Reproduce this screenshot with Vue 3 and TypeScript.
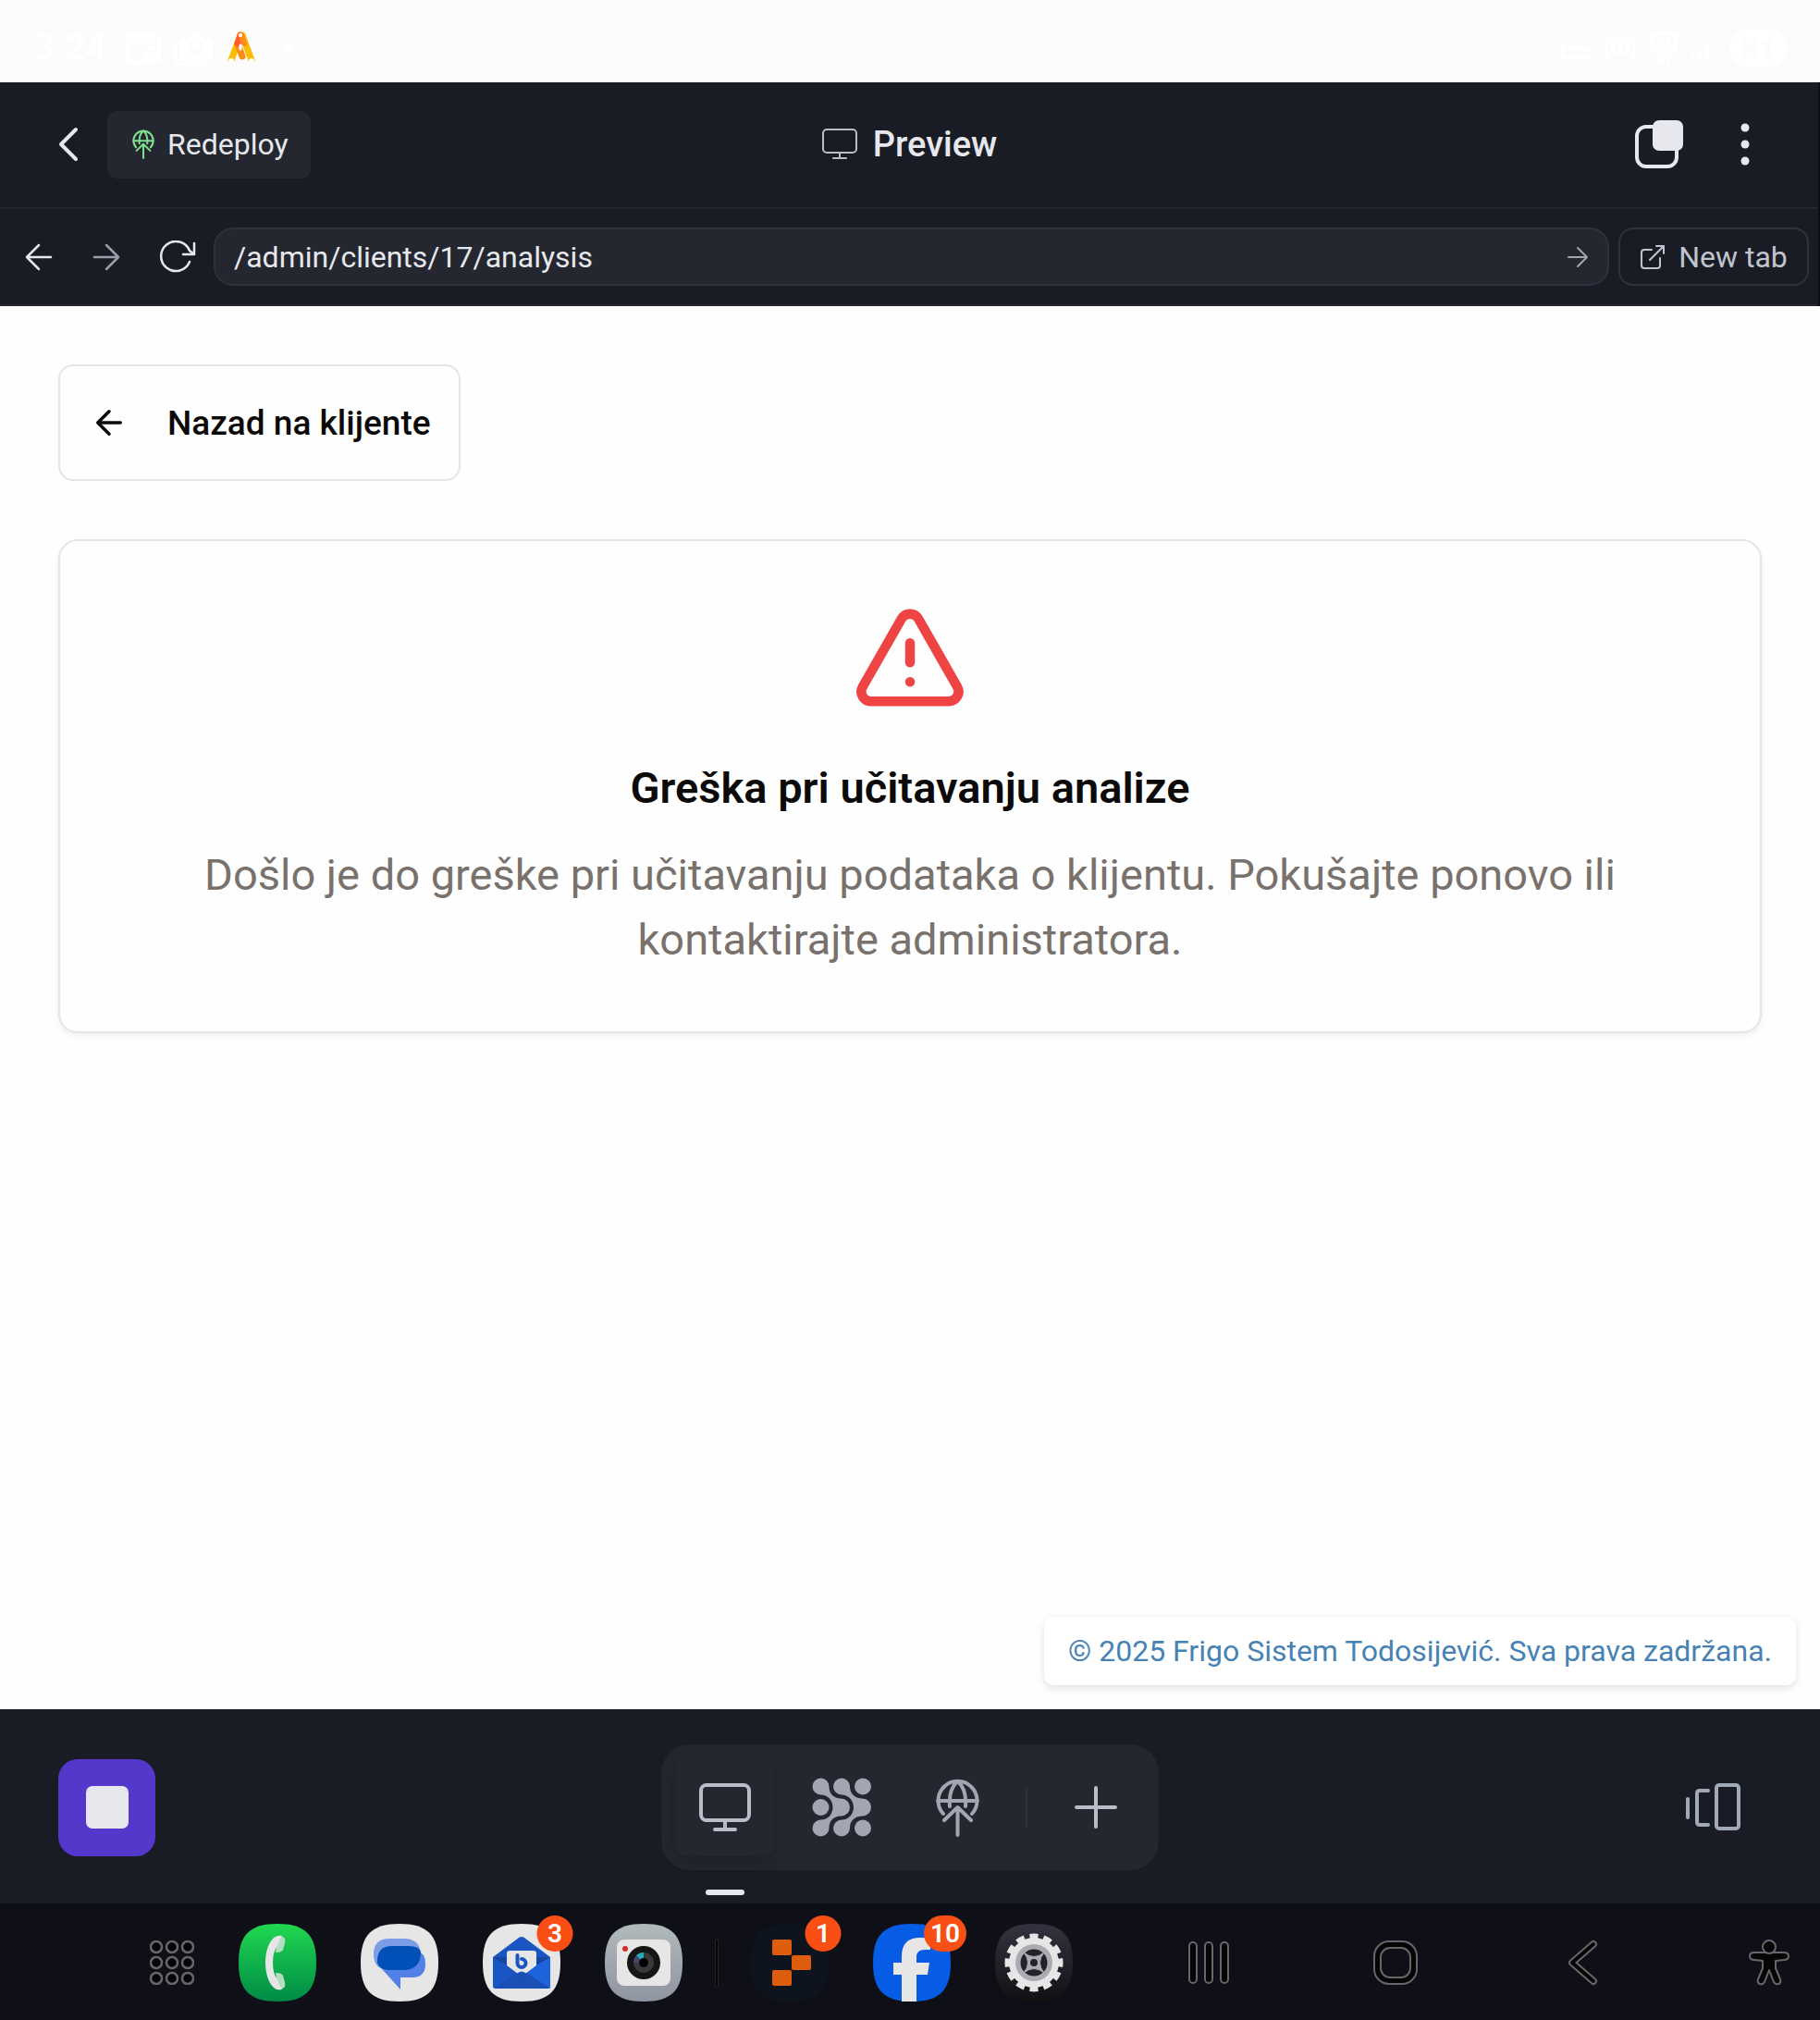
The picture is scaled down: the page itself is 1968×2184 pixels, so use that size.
<script setup lang="ts">
import { ref } from 'vue'

const path = ref('/admin/clients/17/analysis')
const squircle = 'M42 0C72 0 84 12 84 42S72 84 42 84 0 72 0 42 12 0 42 0Z'
const dots = [8, 25, 42]
</script>

<template>
  <div class="screen">
    <header class="status">
      <div class="status-side">
        <time class="clock">3:24</time>
        <svg width="38" height="34" viewBox="0 0 38 34" fill="none" stroke="#fff" stroke-width="3">
          <path d="M2 4v24q0 4 4 4h26q4 0 4-4V4M2 10h34M20 18h14M20 23h14M20 28h14" />
          <path d="M2 4l4-2 4 2 4-2 4 2 4-2 4 2 4-2 6 2" />
        </svg>
        <svg width="44" height="40" viewBox="0 0 44 40">
          <path d="M2 16v17q0 5 5 5h30" fill="none" stroke="#fff" stroke-width="3" />
          <path d="M6 14 24 1l18 13v20H6z" fill="#fff" />
          <path d="M16 12h16v10l-8 6-8-6z" fill="#fcfcfc" />
          <circle cx="24" cy="18" r="4" fill="#fff" />
        </svg>
        <svg class="logo-a" width="30" height="36" viewBox="0 0 30 36" fill="none" stroke-linecap="round">
          <path d="M16 4 26 31" stroke="#fbbc04" stroke-width="7" />
          <path d="M14 4 4 31" stroke="#fbbc04" stroke-width="7" />
          <path d="M12 16 16 27" stroke="#fa8c16" stroke-width="7" />
          <path d="M14 4 11 13" stroke="#ff5a2c" stroke-width="7" />
          <path d="M15 4 18 13" stroke="#ff8a1c" stroke-width="6" />
          <circle cx="14" cy="4" r="2" fill="#fff" />
          <circle cx="4" cy="32" r="3" fill="#fff" />
          <circle cx="26" cy="32" r="3" fill="#fff" />
          <path d="M14 15v4" stroke="#fff" stroke-width="3" />
        </svg>
        <i class="more-dot"></i>
      </div>
      <div class="status-side right">
        <svg width="34" height="32" viewBox="0 0 34 32" fill="none" stroke="#fff" stroke-width="3">
          <path d="M2 8v23M2 26h30M32 30v-9q0-4-4-4H2" />
          <path d="M30 2q1 8-7 8 8 3 8-8" fill="#fff" stroke-width="1" />
        </svg>
        <svg width="34" height="32" viewBox="0 0 34 32" fill="none" stroke="#fff" stroke-width="3">
          <path d="M7 30a15 15 0 1 1 20 0M12 23a8 8 0 1 1 10 0" />
          <circle cx="17" cy="18" r="3" fill="#fff" />
        </svg>
        <span class="network">
          <span class="network-label">5G</span>
          <svg width="24" height="14" viewBox="0 0 24 14" fill="none" stroke="#fff" stroke-width="3">
            <path d="M7 0v11M2 7l5 5 5-5M17 14V3M12 7l5-5 5 5" />
          </svg>
        </span>
        <svg width="28" height="30" viewBox="0 0 28 30" fill="#fff">
          <path d="M0 22h4v6H0zM8 15h4v13H8zM16 8h4v20h-4z" />
          <path d="M24 0h4v28h-4z" opacity=".3" />
        </svg>
        <span class="battery">81</span>
      </div>
    </header>

    <section class="workspace">
      <header class="top">
        <div class="top-left">
          <button class="icon-btn" aria-label="Back">
            <svg width="28" height="40" viewBox="0 0 28 40" fill="none" stroke="#e6e8ed" stroke-width="4" stroke-linecap="round" stroke-linejoin="round">
              <path d="M22 4 6 20l16 16" />
            </svg>
          </button>
          <button class="redeploy">
            <svg width="24" height="32" viewBox="0 0 47 63" fill="none" stroke="#7ee08d" stroke-width="4" stroke-linecap="round" stroke-linejoin="round">
              <path d="M8 38A21 21 0 1 1 39 38M2 24h43M23 3C17 9 14 18 15 30M24 3C30 9 33 18 32 30M23.500 61V31M9 45l14.500-14L38 45" />
            </svg>
            Redeploy
          </button>
        </div>
        <h1 class="title">
          <svg width="40" height="36" viewBox="0 0 40 36" fill="none" stroke="#b8bcc6" stroke-width="2" stroke-linecap="round">
            <rect x="2" y="2" width="36" height="25" rx="4" />
            <path d="M20 27v6M13 33h14" />
          </svg>
          Preview
        </h1>
        <div class="top-right">
          <button class="icon-btn" aria-label="Tabs">
            <svg width="54" height="54" viewBox="0 0 54 54">
              <rect x="3" y="8" width="43" height="43" rx="10" fill="none" stroke="#e6e8ed" stroke-width="4" />
              <rect x="20" y="1" width="33" height="33" rx="7" fill="#e6e8ed" />
            </svg>
          </button>
          <button class="icon-btn" aria-label="Menu">
            <svg width="12" height="54" viewBox="0 0 12 54" fill="#e6e8ed">
              <circle cx="6" cy="9" r="4.500" /><circle cx="6" cy="27" r="4.500" /><circle cx="6" cy="45" r="4.500" />
            </svg>
          </button>
        </div>
      </header>

      <nav class="browser">
        <div class="history">
          <button class="icon-btn" aria-label="Previous page">
            <svg width="32" height="32" viewBox="0 0 32 32" fill="none" stroke="#e6e8ed" stroke-width="2.500" stroke-linecap="round" stroke-linejoin="round">
              <path d="M29 16H3M16 3 3 16l13 13" />
            </svg>
          </button>
          <button class="icon-btn" aria-label="Next page">
            <svg width="32" height="32" viewBox="0 0 32 32" fill="none" stroke="#9a9ea9" stroke-width="2.500" stroke-linecap="round" stroke-linejoin="round">
              <path d="M3 16h26M16 3l13 13-13 13" />
            </svg>
          </button>
          <button class="icon-btn" aria-label="Reload">
            <svg width="40" height="36" viewBox="0 0 40 36" fill="none" stroke="#e6e8ed" stroke-width="2.500" stroke-linecap="round" stroke-linejoin="round">
              <path d="M33 23A16 16 0 1 1 33 11L38 15M38 3v12H26" />
            </svg>
          </button>
        </div>
        <form class="address" @submit.prevent>
          <input v-model="path" type="text" aria-label="Path" />
          <button class="icon-btn" aria-label="Go">
            <svg width="24" height="24" viewBox="0 0 24 24" fill="none" stroke="#a2a6b1" stroke-width="2" stroke-linecap="round" stroke-linejoin="round">
              <path d="M2 12h20M12 2l10 10-10 10" />
            </svg>
          </button>
        </form>
        <button class="newtab">
          <svg width="28" height="28" viewBox="0 0 28 28" fill="none" stroke="#c0c4ce" stroke-width="2" stroke-linecap="round" stroke-linejoin="round">
            <path d="M13 6H5Q2 6 2 9v14q0 3 3 3h14q3 0 3-3v-8M18 2h8v8M26 2 11 17" />
          </svg>
          New tab
        </button>
      </nav>
    </section>

    <main class="page">
      <button class="back">
        <svg width="42" height="42" viewBox="0 0 24 24" fill="none" stroke="currentColor" stroke-width="2" stroke-linecap="round" stroke-linejoin="round">
          <path d="m12 19-7-7 7-7M19 12H5" />
        </svg>
        Nazad na klijente
      </button>
      <section class="card">
        <svg width="126" height="126" viewBox="0 0 24 24" fill="none" stroke="#ef4444" stroke-width="2" stroke-linecap="round" stroke-linejoin="round">
          <path d="m21.730 18-8-14a2 2 0 0 0-3.480 0l-8 14A2 2 0 0 0 4 21h16a2 2 0 0 0 1.730-3M12 9v4M12 17h.010" />
        </svg>
        <h2>Greška pri učitavanju analize</h2>
        <p>Došlo je do greške pri učitavanju podataka o klijentu. Pokušajte ponovo ili kontaktirajte administratora.</p>
      </section>
      <footer class="copyright">© 2025 Frigo Sistem Todosijević. Sva prava zadržana.</footer>
    </main>

    <nav class="toolbar">
      <div class="tool-left">
        <button class="stop" aria-label="Stop"><i></i></button>
      </div>
      <div class="dock">
        <button class="dock-btn active" aria-label="Preview">
          <svg width="58" height="54" viewBox="0 0 58 54" fill="none" stroke="#b9bdc8" stroke-width="4" stroke-linecap="round">
            <rect x="3" y="3" width="52" height="38" rx="6" />
            <path d="M29 41v10M18 51h22" />
          </svg>
        </button>
        <button class="dock-btn" aria-label="Agent">
          <svg width="64" height="64" viewBox="0 0 64 64" fill="#a1a6b1">
            <circle cx="55" cy="9.500" r="9" /><circle cx="9.500" cy="32" r="9" /><circle cx="55" cy="54.500" r="9" />
            <path d="M9.500 .5A9 9 0 0 1 18.500 9.500C18.500 17 23 22.500 31.500 22.500A9.500 9.500 0 0 1 31.500 41.500C23 41.500 18.500 47 18.500 54.500A9 9 0 1 1 9.500 45.500C18 45.500 22.500 39 22.500 32S18 18.500 9.500 18.500A9 9 0 0 1 9.500 .5Z" />
            <path d="M32 .5A9 9 0 0 1 41 9.500C41 17 46 22.500 54.500 22.500A9.500 9.500 0 0 1 54.500 41.500C46 41.500 41 47 41 54.500A9 9 0 1 1 32 45.500C40 45.500 45 39 45 32S40 18.500 32 18.500A9 9 0 0 1 32 .5Z" />
          </svg>
        </button>
        <button class="dock-btn" aria-label="Deploy">
          <svg width="47" height="63" viewBox="0 0 47 63" fill="none" stroke="#a1a6b1" stroke-width="4" stroke-linecap="round" stroke-linejoin="round">
            <path d="M8 38A21 21 0 1 1 39 38M2 24h43M23 3C17 9 14 18 15 30M24 3C30 9 33 18 32 30M23.500 61V31M9 45l14.500-14L38 45" />
          </svg>
        </button>
        <i class="dock-line"></i>
        <button class="dock-btn" aria-label="Add tool">
          <svg width="48" height="48" viewBox="0 0 48 48" stroke="#b9bdc8" stroke-width="4" stroke-linecap="round">
            <path d="M24 3v42M3 24h42" />
          </svg>
        </button>
      </div>
      <div class="tool-right">
        <button class="icon-btn" aria-label="Panels">
          <svg width="62" height="54" viewBox="0 0 62 54" fill="none" stroke="#a1a9b6" stroke-width="4" stroke-linecap="round" stroke-linejoin="round">
            <path d="M3 18v20M25 9H16Q13 9 13 12v31q0 3 3 3h9" />
            <rect x="34" y="3" width="24" height="47" rx="3" />
          </svg>
        </button>
      </div>
    </nav>

    <footer class="taskbar">
      <div class="apps">
        <button class="icon-btn" aria-label="All apps">
          <svg width="48" height="48" viewBox="1 1 48 48" fill="#050506" stroke="#66666b" stroke-width="2.500">
            <template v-for="y in dots" :key="y">
              <circle v-for="x in dots" :key="x" :cx="x" :cy="y" r="6" />
            </template>
          </svg>
        </button>
        <button class="icon-btn" aria-label="Phone">
          <svg width="84" height="84" viewBox="0 0 84 84">
            <defs><linearGradient id="phone" x2="0" y2="1"><stop stop-color="#20d850" /><stop offset="1" stop-color="#008a46" /></linearGradient></defs>
            <path :d="squircle" fill="url(#phone)" />
            <path d="M43 13q9 0 7 8l-2 7q-1 3-8 3zM43 71q9 0 7-8l-2-7q-1-3-8-3z" fill="#b3dec1" />
            <path d="M47 13C36 10 29 26 29 42S36 74 47 71Q45 69 42 60 37 54 37 42T42 24Q45 15 47 13Z" fill="#e6e6e6" />
          </svg>
        </button>
        <button class="icon-btn" aria-label="Messages">
          <svg width="84" height="84" viewBox="0 0 84 84">
            <path :d="squircle" fill="#e6e6e6" />
            <path d="M31 16h16q17 0 18 17v17H31Q14 50 14 33T31 16Z" fill="#7d9ce6" />
            <path d="M60 29Q70 31 70 43 70 58 56 58H43V71L24 50 18 42 22 37Z" fill="#5180e7" />
            <path d="M34 24h18q11 0 13 6 0 20-19 20H31Q18 49 18 40 18 24 34 24Z" fill="#0050b8" />
          </svg>
        </button>
        <button class="icon-btn badged" aria-label="Mail">
          <svg width="84" height="84" viewBox="0 0 84 84">
            <path :d="squircle" fill="#e6e6e6" />
            <path d="M11 36 39 15q3-2 6 0L73 36V67q0 3-3 3H14q-3 0-3-3Z" fill="#1a55c4" />
            <path d="M11 36h62L46 56Z" fill="#15479f" />
            <path d="M73 36v34L46 52Z" fill="#1e62dc" />
            <path d="M29 29h26q3 0 3 3v13L46 54H38L26 45V32q0-3 3-3Z" fill="#e6e6e6" />
            <path d="M12 69 38 53q4-3 8 0L72 69q-1 1-3 1H14z" fill="#1a50b5" />
            <path d="M37.500 34v8M42 38a4.500 4.500 0 1 1-4.500 4.500" fill="none" stroke="#1a55c4" stroke-width="4" stroke-linecap="round" />
          </svg>
          <span class="badge">3</span>
        </button>
        <button class="icon-btn" aria-label="Camera">
          <svg width="84" height="84" viewBox="0 0 84 84">
            <defs><linearGradient id="camera" x2="0" y2="1"><stop stop-color="#b1babc" /><stop offset="1" stop-color="#8f94a1" /></linearGradient></defs>
            <path :d="squircle" fill="url(#camera)" />
            <rect x="13" y="17" width="58" height="50" rx="8" fill="#e6e6e6" />
            <circle cx="22" cy="27" r="3" fill="#d8282f" />
            <circle cx="42" cy="42" r="18" fill="#151515" />
            <circle cx="42" cy="42" r="11" fill="#39393b" />
            <path d="M42 42H31A11 11 0 0 1 42 31Z" fill="#48466c" />
            <path d="M42 42 34 34A11 11 0 0 1 42 31Z" fill="#25aaba" />
            <circle cx="42" cy="42" r="5" fill="#000" />
          </svg>
        </button>
      </div>
      <i class="task-line"></i>
      <div class="apps">
        <button class="icon-btn badged" aria-label="Workspace">
          <svg width="84" height="84" viewBox="0 0 84 84">
            <path :d="squircle" fill="#0e141e" />
            <g fill="#dd5d0c">
              <rect x="23" y="17" width="21" height="17" rx="2" /><rect x="44" y="34" width="21" height="16" rx="2" /><rect x="23" y="50" width="21" height="17" rx="2" />
            </g>
          </svg>
          <span class="badge">1</span>
        </button>
        <button class="icon-btn badged" aria-label="Social">
          <svg width="84" height="84" viewBox="0 0 84 84">
            <path :d="squircle" fill="#075ce5" />
            <path d="M31 84V55h-9V42h9V35Q31 15 51 15 58 15 62 16V28h-6Q47 28 47 36v6h14L59 55H47V84Q39 84 31 84Z" fill="#e6e6e6" />
          </svg>
          <span class="badge">10</span>
        </button>
        <button class="icon-btn" aria-label="Settings">
          <svg width="84" height="84" viewBox="0 0 84 84">
            <defs><linearGradient id="gear" x2="0" y2="1"><stop stop-color="#33323f" /><stop offset="1" stop-color="#111113" /></linearGradient></defs>
            <path :d="squircle" fill="url(#gear)" />
            <circle cx="42" cy="42" r="27" fill="#e6e6e6" />
            <circle cx="42" cy="42" r="28" fill="none" stroke="#e6e6e6" stroke-width="7" pathLength="120" stroke-dasharray="6 4" stroke-dashoffset="3" />
            <circle cx="42" cy="42" r="20" fill="#abacb1" />
            <circle cx="42" cy="42" r="14.500" fill="#22222b" />
            <path d="M31 31q11 9 22 0-9 11 0 22-11-9-22 0 9-11 0-22Z" fill="#abacb1" stroke="#abacb1" stroke-width="1" />
            <circle cx="42" cy="42" r="4" fill="#22222b" />
          </svg>
        </button>
      </div>
      <div class="system">
        <button class="icon-btn" aria-label="Recents">
          <svg width="50" height="50" viewBox="0 0 50 50" fill="#050506" stroke="#66666b" stroke-width="2">
            <rect x="4" y="3" width="8" height="44" rx="4" /><rect x="21" y="3" width="8" height="44" rx="4" /><rect x="38" y="3" width="8" height="44" rx="4" />
          </svg>
        </button>
        <button class="icon-btn" aria-label="Home">
          <svg width="50" height="50" viewBox="0 0 50 50" fill="#050506" stroke="#66666b" stroke-width="2">
            <rect x="2" y="2" width="46" height="46" rx="16" /><rect x="9" y="9" width="32" height="32" rx="10" fill="#0f1017" />
          </svg>
        </button>
        <button class="icon-btn" aria-label="Back">
          <svg width="50" height="50" viewBox="0 0 50 50" fill="none" stroke-linecap="round" stroke-linejoin="round">
            <path d="M37 5 14 25l23 20" stroke="#66666b" stroke-width="8" /><path d="M37 5 14 25l23 20" stroke="#050506" stroke-width="4" />
          </svg>
        </button>
        <button class="icon-btn" aria-label="Accessibility">
          <svg width="50" height="50" viewBox="0 0 50 50" fill="#050506" stroke="#66666b" stroke-width="2" stroke-linejoin="round">
            <path d="M9 14h32q5 0 5 4t-5 4l-9 1v8l5 12q1 4-2 5t-5-2L25 33l-5 13q-2 3-5 2t-2-5l5-12v-8l-9-1q-5 0-5-4t5-4Z" />
            <circle cx="25" cy="8" r="7" />
          </svg>
        </button>
      </div>
    </footer>
  </div>
</template>

<style>
body {
  margin: 0;
  background: #fefefe;
}
</style>

<style scoped>
.screen {
  display: flex;
  flex-direction: column;
  min-height: 100vh;
  font-family: Roboto, "Liberation Sans", sans-serif;
}
.screen *,
.screen {
  box-sizing: border-box;
}
button {
  font-family: inherit;
  margin: 0;
  padding: 0;
  border: 0;
  background: none;
  cursor: pointer;
}
svg {
  display: block;
  flex: none;
}
.icon-btn {
  display: flex;
  align-items: center;
  justify-content: center;
}

.status {
  display: flex;
  justify-content: space-between;
  align-items: center;
  height: 89px;
  padding: 14px 36px 0;
  background: #fcfcfc;
  color: #fff;
}
.status-side {
  display: flex;
  align-items: center;
  gap: 14px;
}
.clock {
  margin-right: 7px;
  font-size: 40px;
  line-height: 48px;
  font-weight: 600;
}
.more-dot {
  width: 10px;
  height: 10px;
  margin-left: 16px;
  border-radius: 50%;
  background: #fff;
}
.network {
  display: flex;
  flex-direction: column;
  align-items: center;
}
.network-label {
  padding: 0 4px;
  border-radius: 4px;
  background: #fff;
  color: #fcfcfc;
  font-size: 18px;
  line-height: 20px;
  font-weight: 700;
}
.battery {
  width: 62px;
  border-radius: 21px;
  background: #fff;
  color: #fcfcfc;
  font-size: 32px;
  line-height: 42px;
  font-weight: 700;
  text-align: center;
}

.workspace {
  border-right: 2px solid #0e0f15;
  background: #1a1c25;
  color: #e6e8ed;
}
.top {
  display: grid;
  grid-template-columns: 1fr auto 1fr;
  align-items: center;
  height: 137px;
  padding: 0 60px 1px;
  border-bottom: 2px solid #242730;
}
.top-left {
  display: flex;
  align-items: center;
  gap: 28px;
}
.redeploy {
  display: flex;
  align-items: center;
  gap: 14px;
  height: 73px;
  padding: 0 24px 0 27px;
  border-radius: 10px;
  background: #242730;
  color: #e6e8ed;
  font-size: 32px;
}
.title {
  display: flex;
  align-items: center;
  gap: 16px;
  margin: 0;
  font-size: 38px;
  line-height: 48px;
  font-weight: 500;
}
.top-right {
  display: flex;
  justify-content: flex-end;
  align-items: center;
  gap: 60px;
  padding-right: 13px;
}
.browser {
  display: flex;
  align-items: center;
  gap: 10px;
  height: 105px;
  padding: 0 10px 0 26px;
  border-bottom: 2px solid #242730;
}
.history {
  display: flex;
  align-items: center;
  gap: 41px;
  margin-right: 9px;
}
.address {
  display: flex;
  flex: 1;
  align-items: center;
  height: 63px;
  padding: 0 20px;
  border: 2px solid #2f323d;
  border-radius: 21px;
  background: #242730;
}
.address input {
  flex: 1;
  min-width: 0;
  padding: 0;
  border: 0;
  outline: 0;
  background: none;
  color: #e6e8ed;
  font-family: inherit;
  font-size: 32px;
}
.newtab {
  display: flex;
  align-items: center;
  justify-content: center;
  gap: 14px;
  width: 206px;
  height: 63px;
  border: 2px solid #2f323d;
  border-radius: 16px;
  color: #c0c4ce;
  font-size: 32px;
}

.page {
  display: flex;
  flex: 1;
  flex-direction: column;
  align-items: flex-start;
  padding: 63px 63px 26px;
  background: #fefefe;
  color: #0c0a09;
}
.back {
  display: flex;
  align-items: center;
  gap: 42px;
  height: 126px;
  padding: 0 30px 0 32px;
  border: 2px solid #e5e5e5;
  border-radius: 16px;
  background: #fefefe;
  color: #0c0a09;
  font-size: 37px;
  font-weight: 500;
}
.card {
  display: flex;
  flex-direction: column;
  align-items: center;
  align-self: stretch;
  margin-top: 63px;
  padding: 63px 63px 64px;
  border: 2px solid #e5e5e5;
  border-radius: 21px;
  background: #fefefe;
  box-shadow: 0 3px 6px rgba(0, 0, 0, 0.06);
  text-align: center;
}
.card h2 {
  margin: 42px 0 23px;
  font-size: 47px;
  line-height: 72px;
  font-weight: 600;
}
.card p {
  margin: 0;
  color: #78716c;
  font-size: 47px;
  line-height: 70px;
}
.copyright {
  align-self: flex-end;
  margin-top: auto;
  margin-right: -37px;
  padding: 13px 26px;
  border-radius: 10px;
  background: #fff;
  box-shadow: 0 3px 8px rgba(0, 0, 0, 0.12);
  color: #4682b4;
  font-size: 32px;
  line-height: 48px;
}

.toolbar {
  display: grid;
  grid-template-columns: 1fr auto 1fr;
  align-items: center;
  height: 210px;
  padding: 2px 63px 0;
  background: #1a1c25;
}
.tool-right {
  display: flex;
  justify-content: flex-end;
  padding-right: 21px;
}
.stop {
  display: flex;
  align-items: center;
  justify-content: center;
  width: 105px;
  height: 105px;
  border-radius: 21px;
  background: #5338cb;
}
.stop i {
  width: 46px;
  height: 46px;
  border-radius: 7px;
  background: #e6e8ed;
}
.dock {
  display: flex;
  align-items: center;
  gap: 21px;
  height: 136px;
  padding: 0 16px;
  border-radius: 31px;
  background: #242730;
}
.dock-btn {
  display: flex;
  position: relative;
  align-items: center;
  justify-content: center;
  width: 105px;
  height: 105px;
  border-radius: 10px;
}
.dock-btn.active {
  box-shadow: 0 5px 16px rgba(20, 22, 30, 0.4);
}
.dock-btn.active::after {
  content: "";
  position: absolute;
  bottom: -42px;
  left: 32px;
  width: 42px;
  height: 6px;
  border-radius: 3px;
  background: #e6e8ed;
}
.dock-line {
  width: 2px;
  height: 42px;
  background: #2f323d;
}

.taskbar {
  display: flex;
  align-items: center;
  height: 126px;
  padding: 2px 30px 0 162px;
  background: #0f1017;
}
.apps {
  display: flex;
  align-items: center;
  gap: 48px;
}
.task-line {
  width: 4px;
  height: 53px;
  margin: 0 35px;
  border: 1px solid #252528;
  border-radius: 2px;
  background: #050506;
}
.badged {
  position: relative;
}
.badge {
  position: absolute;
  top: -9px;
  left: 78px;
  min-width: 39px;
  padding: 0 7px;
  border-radius: 20px;
  background: #f94f14;
  color: #fff;
  font-size: 28px;
  line-height: 39px;
  font-weight: 600;
  text-align: center;
  transform: translateX(-50%);
}
.system {
  display: flex;
  flex: 1;
  justify-content: space-between;
  margin-left: 122px;
}
</style>
